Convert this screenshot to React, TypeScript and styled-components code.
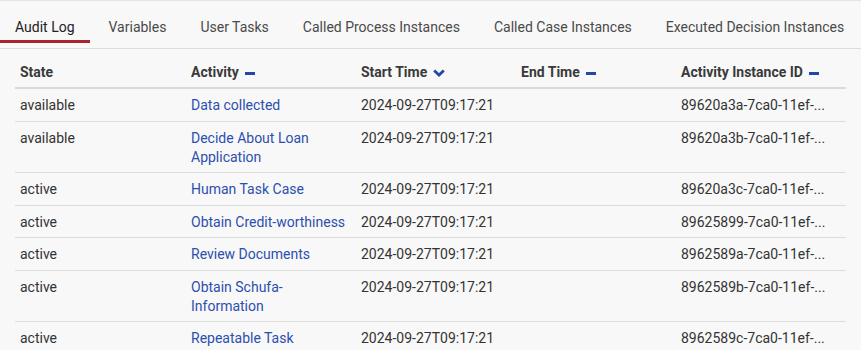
import styled, { createGlobalStyle } from 'styled-components';

const GlobalStyle = createGlobalStyle`
  html, body {
    margin: 0;
    padding: 0;
    background: #f8f8f8;
  }
  body {
    font-family: Roboto, 'Liberation Sans', sans-serif;
    font-size: 14px;
    color: #333;
  }
`;

type Row = {
  state: string;
  activity: string;
  start: string;
  end: string;
  id: string;
};

const rows: Row[] = [
  { state: 'available', activity: 'Data collected', start: '2024-09-27T09:17:21', end: '', id: '89620a3a-7ca0-11ef-...' },
  { state: 'available', activity: 'Decide About Loan Application', start: '2024-09-27T09:17:21', end: '', id: '89620a3b-7ca0-11ef-...' },
  { state: 'active', activity: 'Human Task Case', start: '2024-09-27T09:17:21', end: '', id: '89620a3c-7ca0-11ef-...' },
  { state: 'active', activity: 'Obtain Credit-worthiness', start: '2024-09-27T09:17:21', end: '', id: '89625899-7ca0-11ef-...' },
  { state: 'active', activity: 'Review Documents', start: '2024-09-27T09:17:21', end: '', id: '8962589a-7ca0-11ef-...' },
  { state: 'active', activity: 'Obtain Schufa-Information', start: '2024-09-27T09:17:21', end: '', id: '8962589b-7ca0-11ef-...' },
  { state: 'active', activity: 'Repeatable Task', start: '2024-09-27T09:17:21', end: '', id: '8962589c-7ca0-11ef-...' },
];

const tabs = [
  'Audit Log',
  'Variables',
  'User Tasks',
  'Called Process Instances',
  'Called Case Instances',
  'Executed Decision Instances',
];

type SortKind = 'none' | 'desc';

const columns: { label: string; width: number; sort?: SortKind }[] = [
  { label: 'State', width: 171 },
  { label: 'Activity', width: 170, sort: 'none' },
  { label: 'Start Time', width: 160, sort: 'desc' },
  { label: 'End Time', width: 160, sort: 'none' },
  { label: 'Activity Instance ID', width: 170, sort: 'none' },
];

const App = () => {
  return (
    <Page>
      <GlobalStyle />
      <TabBar>
        {tabs.map((t, i) => (
          <Tab key={t} $active={i === 0}>
            {t}
          </Tab>
        ))}
      </TabBar>
      <TableWrap>
        <Table>
          <colgroup>
            {columns.map((c) => (
              <col key={c.label} style={{ width: c.width }} />
            ))}
          </colgroup>
          <thead>
            <tr>
              {columns.map((c) => (
                <HeadCell key={c.label}>
                  {c.label}
                  {c.sort === 'none' && <SortDash />}
                  {c.sort === 'desc' && (
                    <SortChevron viewBox="0 0 12 8" width="12" height="8">
                      <path d="M1.2 1.4 L6 6 L10.8 1.4" fill="none" stroke="currentColor" strokeWidth="2.8" />
                    </SortChevron>
                  )}
                </HeadCell>
              ))}
            </tr>
          </thead>
          <tbody>
            {rows.map((r) => (
              <tr key={r.id}>
                <Cell>{r.state}</Cell>
                <Cell>
                  <ActivityLink href="#">{r.activity}</ActivityLink>
                </Cell>
                <Cell>{r.start}</Cell>
                <Cell>{r.end}</Cell>
                <Cell>{r.id}</Cell>
              </tr>
            ))}
          </tbody>
        </Table>
      </TableWrap>
    </Page>
  );
};

export default App;

const Page = styled.div`
  width: 861px;
  height: 350px;
  overflow: hidden;
  background: #f8f8f8;
`;

const TabBar = styled.div`
  display: flex;
  gap: 4px;
  border-top: 1px solid #e4e4e4;
  border-bottom: 1px solid #dcdcdc;
  padding-bottom: 5px;
  white-space: nowrap;
`;

const Tab = styled.div<{ $active?: boolean }>`
  padding: 16px 15px 3px;
  line-height: 20px;
  color: ${({ $active }) => ($active ? '#222' : '#4a4a4a')};
  border-bottom: 3px solid ${({ $active }) => ($active ? '#a8232d' : 'transparent')};
`;

const TableWrap = styled.div`
  padding: 7px 15px 0;
`;

const Table = styled.table`
  width: 831px;
  table-layout: fixed;
  border-collapse: collapse;
`;

const HeadCell = styled.th`
  text-align: left;
  font-weight: 700;
  color: #3a3a3a;
  padding: 7px 5px 5px;
  line-height: 19px;
  border-bottom: 2px solid #dadada;
  white-space: nowrap;
`;

const SortDash = styled.span`
  display: inline-block;
  width: 10px;
  height: 3px;
  margin-left: 6px;
  vertical-align: middle;
  background: #2448a8;
`;

const SortChevron = styled.svg`
  margin-left: 6px;
  color: #2448a8;
  vertical-align: middle;
`;

const Cell = styled.td`
  padding: 7px 5px 5.5px;
  line-height: 19px;
  vertical-align: top;
  border-bottom: 1px solid #dcdcdc;
  color: #333;
`;

const ActivityLink = styled.a`
  color: #2c4fae;
  text-decoration: none;
`;
